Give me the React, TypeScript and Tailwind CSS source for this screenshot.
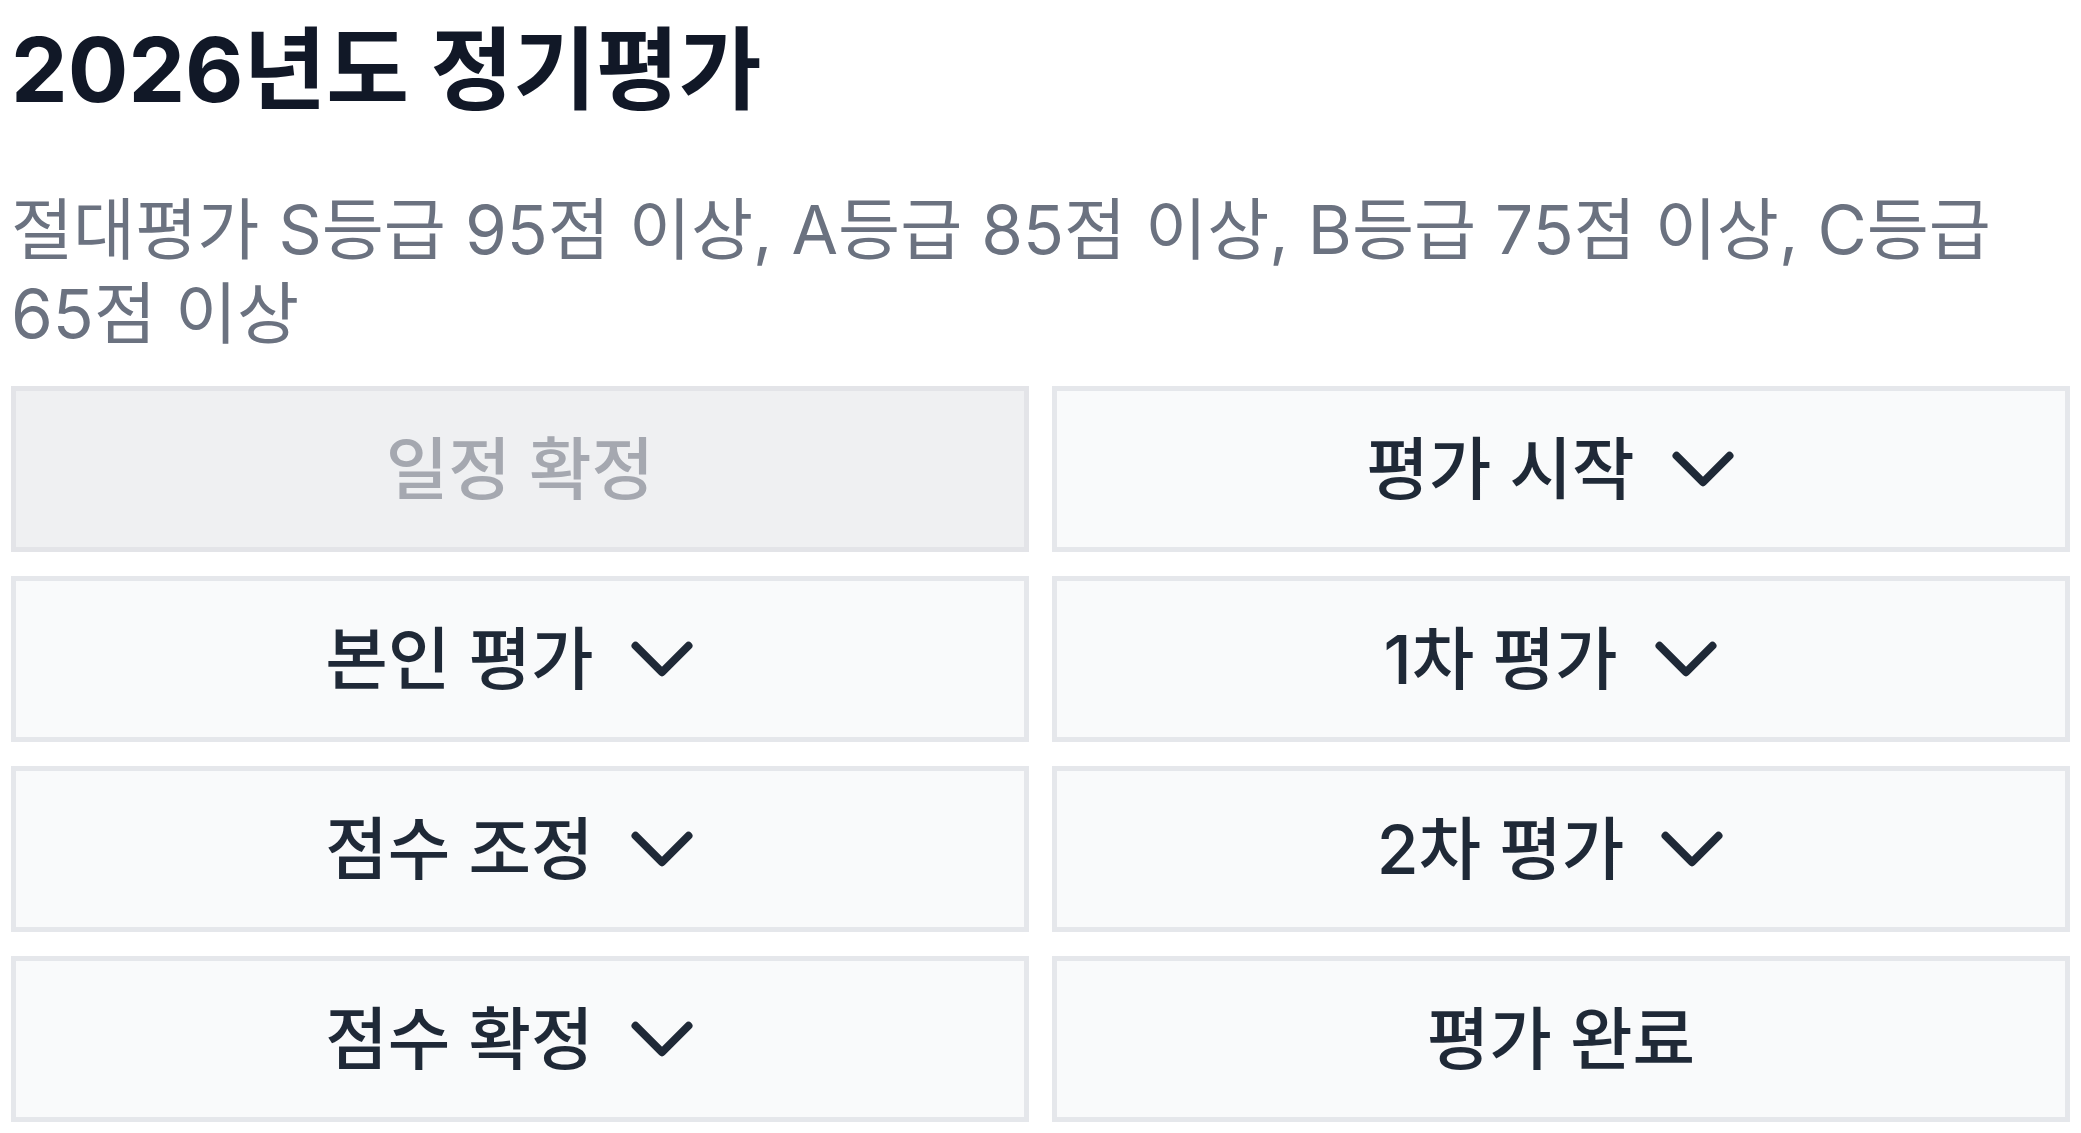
import React from "react";
import { ChevronDown } from "lucide-react";

type Item = { label: string; chevron: boolean; disabled?: boolean };

const items: Item[] = [
  { label: "일정 확정", chevron: false, disabled: true },
  { label: "평가 시작", chevron: true },
  { label: "본인 평가", chevron: true },
  { label: "1차 평가", chevron: true },
  { label: "점수 조정", chevron: true },
  { label: "2차 평가", chevron: true },
  { label: "점수 확정", chevron: true },
  { label: "평가 완료", chevron: false },
];

function StepButton({ item }: { item: Item }) {
  if (item.disabled) {
    return (
      <button
        type="button"
        disabled
        className="h-[166px] border-[5px] border-[#e3e4e8] bg-[#eff0f2] flex items-center justify-center text-[68px] font-medium leading-none text-[#a5a8b0]"
      >
        <span>{item.label}</span>
      </button>
    );
  }
  return (
    <button
      type="button"
      className="h-[166px] border-[5px] border-[#e5e7eb] bg-[#f9fafb] flex items-center justify-center gap-[15px] text-[68px] font-medium leading-none text-[#1f2937]"
    >
      <span>{item.label}</span>
      {item.chevron && <ChevronDown size={106} strokeWidth={1.8} className="shrink-0" />}
    </button>
  );
}

export default function App() {
  return (
    <div className="min-h-screen bg-white px-[11px] pt-[25px] font-[Inter,'Noto_Sans_CJK_KR',sans-serif]">
      <h1 className="text-[90px] font-bold leading-none text-[#111827]">2026년도 정기평가</h1>
      <p className="mt-[73px] text-[67.5px] leading-[84px] text-[#6b7280] break-keep">
        절대평가 S등급 95점 이상, A등급 85점 이상, B등급 75점 이상, C등급 65점 이상
      </p>
      <div className="mt-[30px] grid grid-cols-2 gap-x-[23px] gap-y-[24px]">
        {items.map((it) => (
          <StepButton key={it.label} item={it} />
        ))}
      </div>
    </div>
  );
}
